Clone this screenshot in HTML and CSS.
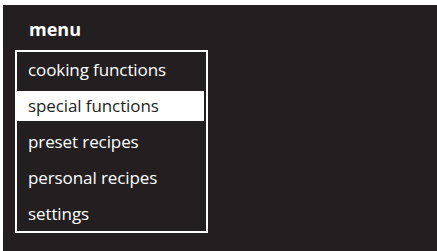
FILE: index.html
```html
<!DOCTYPE html>
<html>
<head>
<meta charset="utf-8">
<link rel="stylesheet" href="styles.css">
</head>
<body>
<div class="screen">
  <div class="title">menu</div>
  <ul class="menu">
    <li class="item">cooking functions</li>
    <li class="item selected">special functions</li>
    <li class="item">preset recipes</li>
    <li class="item">personal recipes</li>
    <li class="item">settings</li>
  </ul>
</div>
</body>
</html>
```
FILE: styles.css
```css
html, body {
  margin: 0;
  padding: 0;
  background: #ffffff;
}
body {
  width: 437px;
  height: 251px;
  overflow: hidden;
  font-family: "Open Sans", "Noto Sans", sans-serif;
}
.screen {
  margin: 5px 0 0 3px;
  height: 246px;
  background: #231f20;
  padding: 0 0 0 12px;
  box-sizing: border-box;
}
.title {
  color: #ffffff;
  font-weight: 700;
  font-size: 18px;
  line-height: 24px;
  padding: 12px 0 0 14px;
  height: 31px;
  box-sizing: border-box;
}
.menu {
  list-style: none;
  margin: 14px 0 0 0;
  padding: 3px 2px 2px 0;
  width: 193px;
  box-sizing: border-box;
  border: 2px solid #ffffff;
  display: flex;
  flex-direction: column;
  gap: 6px;
}
.item {
  height: 30px;
  line-height: 29px;
  color: #ffffff;
  font-size: 17px;
  letter-spacing: -0.1px;
  padding-left: 11px;
}
.item.selected {
  background: #ffffff;
  color: #231f20;
}
```
